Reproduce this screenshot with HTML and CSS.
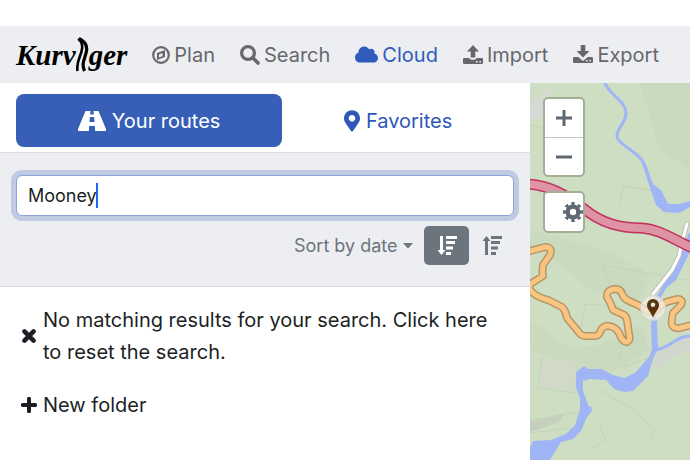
FILE: index.html
```html
<!DOCTYPE html>
<html lang="en">
<head>
  <meta charset="UTF-8">
  <meta name="viewport" content="width=device-width, initial-scale=1.0">
  <title>Kurviger</title>
  <link rel="stylesheet" href="styles.css">
</head>
<body>
  <header class="navbar">
    <a class="logo" href="#" aria-label="Kurviger">
      <span>Kurv</span>
      <svg class="logo-road" viewBox="0 0 13 35">
        <path class="line" d="M2 2Q7 5 6 12C5 20 0 24 1.5 34" stroke-width="2.6"/>
        <path class="line" d="M3 1.5Q12 6 10.5 14C9 22 5 26 8.5 34" stroke-width="3.2"/>
      </svg>
      <span>ger</span>
    </a>
    <nav class="menu">
      <a href="#plan">
        <svg class="icon-plan" viewBox="0 0 18 18">
          <circle class="line" cx="9" cy="9" r="7.8" stroke-width="2.2"/>
          <path fill-rule="evenodd" d="M13 4V11L5 14V7ZM7 8.5V11.5L10.5 10V7Z"/>
        </svg>
        Plan
      </a>
      <a href="#search">
        <svg class="icon-nav" viewBox="0 0 20 20">
          <circle class="line" cx="8" cy="8" r="6.4" stroke-width="3.2"/>
          <path class="line" d="M12.8 12.8L18 18" stroke-width="3.6" stroke-linecap="round"/>
        </svg>
        Search
      </a>
      <a class="active" href="#cloud">
        <svg class="icon-cloud" viewBox="0 32 640 448">
          <path d="M537.6 226.6c4.1-10.7 6.4-22.4 6.4-34.6 0-53-43-96-96-96-19.7 0-38.1 6-53.3 16.2C367 64.2 315.3 32 256 32c-88.4 0-160 71.6-160 160 0 2.7.1 5.4.2 8.1C40.2 219.8 0 273.2 0 336c0 79.5 64.5 144 144 144h368c70.7 0 128-57.3 128-128 0-61.9-44-113.6-102.4-125.4z"/>
        </svg>
        Cloud
      </a>
      <a href="#import">
        <svg class="icon-nav" viewBox="0 0 20 20">
          <path d="M10 0L16 6.5H12.3V12.5H7.7V6.5H4Z"/>
          <path fill-rule="evenodd" d="M1.2 13H6.2C6.8 14.2 8 14.8 10 14.8S13.2 14.2 13.8 13H18.8Q20 13 20 14.2V17.8Q20 19 18.8 19H1.2Q0 19 0 17.8V14.2Q0 13 1.2 13ZM13 16V17.4H14.6V16ZM16.4 16V17.4H18V16Z"/>
        </svg>
        Import
      </a>
      <a href="#export">
        <svg class="icon-nav" viewBox="0 0 20 20">
          <path d="M7.7 0H12.3V6H16.5L10 12.5L3.5 6H7.7Z"/>
          <path fill-rule="evenodd" d="M1.2 12H5.2L10 16L14.8 12H18.8Q20 12 20 13.2V16.8Q20 18 18.8 18H1.2Q0 18 0 16.8V13.2Q0 12 1.2 12ZM13 15V16.4H14.6V15ZM16.4 15V16.4H18V15Z"/>
        </svg>
        Export
      </a>
    </nav>
  </header>

  <main class="content">
    <section class="sidebar">
      <div class="tabs">
        <button type="button" class="tab tab-active">
          <svg class="icon-road" viewBox="0 0 28 20">
            <path fill-rule="evenodd" d="M7.5 0H12.5L12.2 3.5H15.8L15.5 0H20.5L28 18Q28.5 20 26.8 20H17.2L16.8 15H11.2L10.8 20H1.2Q-.5 20 0 18ZM12 6L11.4 11H16.6L16 6Z"/>
          </svg>
          Your routes
        </button>
        <button type="button" class="tab">
          <svg class="icon-marker" viewBox="0 0 384 512">
            <path d="M172.268 501.67C26.97 291.031 0 269.413 0 192 0 85.961 85.961 0 192 0s192 85.961 192 192c0 77.413-26.97 99.031-172.268 309.67-9.535 13.774-29.93 13.773-39.464 0zM192 272c44.183 0 80-35.817 80-80s-35.817-80-80-80-80 35.817-80 80 35.817 80 80 80z"/>
          </svg>
          Favorites
        </button>
      </div>

      <form class="filter">
        <div class="search-box">
          <input type="text" class="search-input" value="Mooney" aria-label="Search routes">
          <span class="caret"></span>
        </div>
        <div class="sort">
          <label class="sort-field">
            <select class="sort-select" aria-label="Sort order">
              <option>Sort by date</option>
            </select>
            <svg class="icon-down" viewBox="0 0 10 6"><path d="M0 0H10L5 5.5Z"/></svg>
          </label>
          <button type="button" class="sort-btn sort-btn-active" aria-label="Descending">
            <svg class="icon-nav" viewBox="0 0 20 20">
              <path d="M3 0H6V14H8.5L4.5 19L.5 14H3ZM9 0H20V3H9ZM9 5H18V8H9ZM9 10.5H16V13.5H9ZM9 16H14V19H9Z"/>
            </svg>
          </button>
          <button type="button" class="sort-btn" aria-label="Ascending">
            <svg class="icon-nav" viewBox="0 0 20 20">
              <path d="M3 19H6V5H8.5L4.5 0L.5 5H3ZM9 0H20V3H9ZM9 5H18V8H9ZM9 10.5H16V13.5H9ZM9 16H14V19H9Z"/>
            </svg>
          </button>
        </div>
      </form>

      <div class="results">
        <button type="button" class="result">
          <svg class="icon-action" viewBox="0 0 16 16">
            <path class="line" d="M3.4 3.4L12.6 12.6M12.6 3.4L3.4 12.6" stroke-width="4.6" stroke-linecap="round"/>
          </svg>
          <span>No matching results for your search. Click here to reset the search.</span>
        </button>
        <button type="button" class="result">
          <svg class="icon-action" viewBox="0 0 16 16">
            <path class="line" d="M8 1.8V14.2M1.8 8H14.2" stroke-width="4" stroke-linecap="round"/>
          </svg>
          <span>New folder</span>
        </button>
      </div>
    </section>

    <section class="map" aria-label="Map">
      <svg class="map-canvas" viewBox="530 83 160 377" preserveAspectRatio="xMinYMin slice">
        <defs>
          <path id="motorway" d="M525 184C545 184 566 194 583 208C602 224 621 228 641 228C661 229 675 241 695 249"/>
          <path id="pass" d="M525 252L530 251L545 247Q553 247 550 255L543 265Q542 272 543 276L532 283Q527 286 531 291Q536 297 548 300L562 307Q566 311 567 318L577 330Q581 336 585 336H595Q599 336 601 330Q604 325 609 326Q616 327 619 333Q623 343 627 342Q631 340 629 334L627 320Q626 315 622 314L613 310Q611 303 607 297Q606 290 615 289Q621 289 622 294Q624 299 629 301L638 305L647 311Q656 313 659 307Q662 303 670 301L678 299Q684 300 681 305L673 313Q671 322 672 325Q674 329 680 328L695 324"/>
          <path id="lane" d="M687 224L682 242L679 256L672 270L653 294"/>
        </defs>
        <rect x="530" y="83" width="160" height="377" fill="#cedec3"/>
        <!-- relief and built-up areas -->
        <g fill="#c6d8bd" opacity=".6">
          <path d="M530 230L560 238L610 252L650 275L640 300L590 290L560 262L530 250Z"/>
          <path d="M530 320L570 348L600 345L640 325L650 350L610 374L580 370L530 350Z"/>
          <path d="M640 83L690 83V170L660 150Z"/>
        </g>
        <path d="M538 97L546 92L551 88L552 93L547 98L544 119H530V102Z" fill="#d6d9d4"/>
        <path d="M542 357L577 361L575 392L538 388Z" fill="#d0dac7"/>
        <path d="M530 421L566 413L558 423L530 432Z" fill="#c6cfbe"/>
        <path d="M656 350L680 337H690V349L666 360L664 366L652 368Z" fill="#d2d6ce"/>
        <g fill="none" stroke="#c2d4b8">
          <path d="M542 357L538 388L575 393M530 420L580 412M530 433L573 428"/>
          <path d="M602 265L608 281L623 286M602 265L660 275L690 281M585 304L623 307M585 304L580 333"/>
          <path d="M623 186L650 190L664 194M623 186L620 205M530 125L545 129"/>
          <path d="M597 387L616 400L633 408L654 430L650 445M600 425L605 440L590 451M606 365L618 353L623 367L648 358"/>
        </g>
        <!-- rivers -->
        <g fill="none" stroke="#a0b5f5" stroke-linejoin="round" stroke-linecap="round">
          <path d="M605 83C610 96 626 101 626 113C626 123 616 129 617 137C619 145 639 153 643 162L652 187" stroke-width="3"/>
          <path d="M690 235C682 258 675 267 668 281L657 300L653 325L654 350" stroke-width="4"/>
          <path d="M656 350C672 347 676 336 690 336" stroke-width="3"/>
        </g>
        <g fill="#a0b5f5">
          <path d="M642 162L646 164L653 184L661 190L668 204H679L690 201V207L679 213L664 212L656 205L650 188Z"/>
          <path d="M652 320H657L658 348L653 359L648 376L633 391L624 392L614 389L606 380L590 379L583 381L583 391L589 407L591 406L592 411L587 417L581 431L573 439L561 442L550 460H530V447L533 441L551 440L566 434L575 425L580 409L580 398L576 388L576 372L584 366L588 369L601 369L613 375L625 378L636 372L649 357L652 349Z"/>
          <path d="M690 238V252L684 264L676 280L667 287L660 293L668 280L679 260Z"/>
        </g>
        <use href="#lane" class="road" stroke="#b9bfb5" stroke-width="5"/>
        <use href="#lane" class="road" stroke="#fff" stroke-width="3"/>
        <use href="#motorway" class="road" stroke="#c2315c" stroke-width="11"/>
        <use href="#motorway" class="road" stroke="#de94a5" stroke-width="8"/>
        <use href="#pass" class="road" stroke="#b99565" stroke-width="8"/>
        <use href="#pass" class="road" stroke="#f8c682" stroke-width="5"/>
        <!-- favorite pin -->
        <circle cx="653" cy="308" r="12.5" fill="#f1eee3" fill-opacity=".75" stroke="#d3d5d1"/>
        <path fill="#58330c" fill-rule="evenodd" d="M653 317.5C650 311 647 309 647 305A6 6 0 0 1 659 305C659 309 656 311 653 317.5ZM653 302.5A2.3 2.3 0 1 0 653 307.1A2.3 2.3 0 1 0 653 302.5Z"/>
      </svg>
      <div class="map-controls">
        <div class="control">
          <button type="button" aria-label="Zoom in">
            <svg class="icon-action" viewBox="0 0 16 16"><path class="line" d="M8 0V16M0 8H16" stroke-width="3"/></svg>
          </button>
          <button type="button" aria-label="Zoom out">
            <svg class="icon-action" viewBox="0 0 16 16"><path class="line" d="M0 8H16" stroke-width="3"/></svg>
          </button>
        </div>
        <div class="control control-settings">
          <button type="button" aria-label="Map settings">
            <svg class="icon-nav" viewBox="0 0 20 20">
              <circle class="line" cx="10" cy="10" r="5.4" stroke-width="4.4"/>
              <circle class="line" cx="10" cy="10" r="8.5" stroke-width="3" pathLength="16" stroke-dasharray="1 1" stroke-dashoffset=".5"/>
            </svg>
          </button>
        </div>
      </div>
    </section>
  </main>
</body>
</html>
```

FILE: styles.css
```css
* {
  box-sizing: border-box;
}
body {
  margin: 0;
  padding-top: 26px;
  min-height: 100vh;
  display: flex;
  flex-direction: column;
  font-family: Inter, "Liberation Sans", sans-serif;
  font-size: 20px;
  line-height: 32px;
  color: #1c1f24;
  background-color: #fff;
}
button, input, select {
  font: inherit;
  color: inherit;
}
button {
  padding: 0;
  border: none;
  background: none;
  cursor: pointer;
}
svg {
  display: block;
  flex: none;
  fill: currentColor;
}
.line {
  fill: none;
  stroke: currentColor;
}

/* Navbar */
.navbar {
  display: flex;
  align-items: center;
  gap: 25px;
  height: 57px;
  padding: 0 16px;
  background-color: #edeef2;
}
.navbar a {
  text-decoration: none;
}
.logo {
  display: flex;
  align-items: center;
  font-family: "Liberation Serif", serif;
  font-size: 29px;
  font-weight: bold;
  font-style: italic;
  color: #000;
}
.logo-road {
  width: 13px;
  height: 35px;
}
.menu {
  display: flex;
  gap: 25px;
}
.menu a {
  display: flex;
  align-items: center;
  gap: 4px;
  color: #67686b;
}
.menu a.active {
  color: #2f5bbd;
}
.icon-plan {
  width: 18px;
  height: 18px;
}
.icon-nav {
  width: 20px;
  height: 20px;
}
.icon-cloud {
  width: 23px;
  height: 17px;
}

/* Layout */
.content {
  flex: 1;
  display: grid;
  grid-template-columns: 53fr 16fr;
}
.sidebar {
  min-width: 0;
}

/* Tabs */
.tabs {
  display: flex;
  padding: 11px 16px 5px;
}
.tab {
  flex: 1 1 auto;
  display: flex;
  align-items: center;
  justify-content: center;
  gap: 6px;
  height: 53px;
  border-radius: 8px;
  color: #2f57b5;
}
.tab-active {
  color: #fff;
  background-color: #375fb8;
}
.icon-road {
  width: 28px;
  height: 20px;
}
.icon-marker {
  width: 16px;
  height: 24px;
}

/* Search and sort */
.filter {
  padding: 22px 16px 21px;
  border-top: 1px solid #dcdde2;
  border-bottom: 1px solid #d6d8dd;
  background-color: #edeef2;
}
.search-box {
  position: relative;
}
.search-input {
  display: block;
  width: 100%;
  height: 41px;
  padding: 0 11px;
  border: 1px solid #8ea5dc;
  border-radius: 6px;
  outline: none;
  box-shadow: 0 0 0 5px #bfcbe3;
  background-color: #fff;
  font-size: 18px;
}
.caret {
  position: absolute;
  top: 8px;
  left: 80px;
  width: 2px;
  height: 25px;
  background-color: #1f66f2;
}
.sort {
  display: flex;
  justify-content: flex-end;
  align-items: center;
  padding-top: 10px;
  color: #6c757d;
  font-size: 18px;
}
.sort-field {
  display: flex;
  align-items: center;
  gap: 5px;
  margin-right: 11px;
}
.sort-select {
  appearance: none;
  padding: 0;
  border: none;
  background: none;
}
.icon-down {
  width: 10px;
  height: 6px;
}
.sort-btn {
  display: flex;
  align-items: center;
  justify-content: center;
  width: 45px;
  height: 39px;
  border-radius: 5px;
}
.sort-btn-active {
  color: #fff;
  background-color: #6c757d;
}

/* Results */
.results {
  display: flex;
  flex-direction: column;
  gap: 21px;
  padding: 17px 21px;
}
.result {
  display: flex;
  align-items: center;
  gap: 6px;
  text-align: left;
}
.icon-action {
  width: 16px;
  height: 16px;
}

/* Map */
.map {
  position: relative;
  overflow: hidden;
  background-color: #cedec3;
}
.map-canvas {
  position: absolute;
  width: 100%;
  height: 100%;
}
.road {
  fill: none;
  stroke-linecap: round;
  stroke-linejoin: round;
}
.map-controls {
  position: absolute;
  top: 14px;
  left: 13px;
  display: flex;
  flex-direction: column;
  gap: 14px;
}
.control {
  border: 2px solid #a2b096;
  border-radius: 5px;
  background-color: #fff;
  color: #5f6872;
}
.control button {
  display: flex;
  align-items: center;
  justify-content: center;
  width: 38px;
  height: 38px;
}
.control button + button {
  border-top: 1px solid #c3c6c3;
}
.control-settings button {
  justify-content: flex-end;
}
```
